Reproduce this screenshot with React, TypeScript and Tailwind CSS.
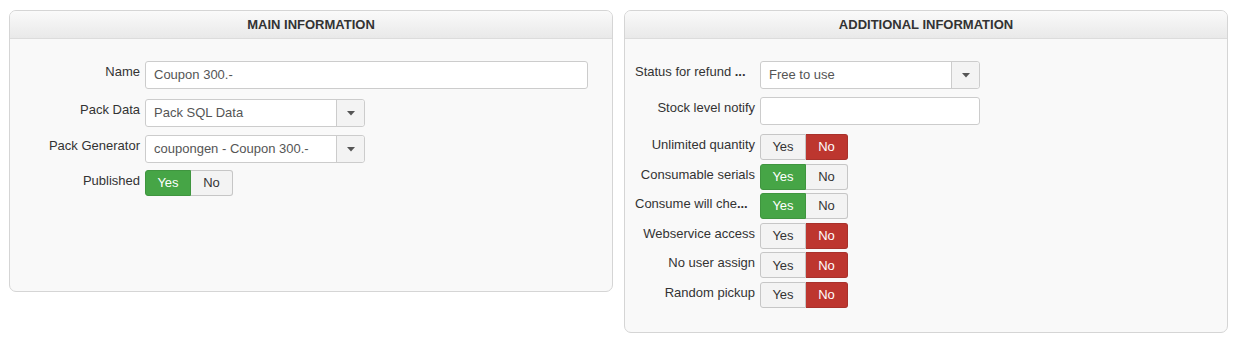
import React from "react";

const font = { fontFamily: '"Liberation Sans", Arial, sans-serif' };

function Label({ children, left = false }: { children: React.ReactNode; left?: boolean }) {
  return (
    <div
      className={
        left
          ? "w-[130px] shrink-0 pl-[10px] pt-[2px] text-left text-[13px] leading-[18px] text-[#333] whitespace-nowrap"
          : "w-[130px] shrink-0 pl-[8px] pt-[2px] text-right text-[13px] leading-[18px] text-[#333] whitespace-nowrap"
      }
    >
      {children}
    </div>
  );
}

function TextInput({ value, width }: { value: string; width: string }) {
  return (
    <div
      className={`${width} h-[28px] flex items-center rounded-[3px] border border-[#cccccc] bg-white pl-[8px] text-[13px] text-[#555]`}
    >
      {value}
    </div>
  );
}

function Select({ value }: { value: string }) {
  return (
    <div className="w-[220px] h-[28px] flex rounded-[3px] border border-[#cccccc] bg-white text-[13px] text-[#555]">
      <div className="flex-1 flex items-center pl-[8px]">{value}</div>
      <div className="w-[28px] flex items-center justify-center border-l border-[#cccccc] bg-[#f3f3f3] rounded-r-[3px]">
        <svg width="8" height="5" viewBox="0 0 8 5">
          <path d="M0 0 L8 0 L4 4.5 Z" fill="#555" />
        </svg>
      </div>
    </div>
  );
}

function Toggle({ yes }: { yes: boolean }) {
  return (
    <div className="flex h-[26px] text-[13px]">
      <div
        className={
          yes
            ? "w-[46px] flex items-center justify-center rounded-l-[3px] border border-[#3f953f] bg-[#46a546] text-white"
            : "w-[46px] flex items-center justify-center rounded-l-[3px] border border-[#c6c6c6] bg-[#f3f3f3] text-[#333]"
        }
      >
        Yes
      </div>
      <div
        className={
          yes
            ? "w-[42px] flex items-center justify-center rounded-r-[3px] border border-l-0 border-[#c6c6c6] bg-[#f3f3f3] text-[#333]"
            : "w-[42px] flex items-center justify-center rounded-r-[3px] border border-l-0 border-[#a8312b] bg-[#bd362f] text-white"
        }
      >
        No
      </div>
    </div>
  );
}

function Row({
  label,
  children,
  className = "",
  left = false,
}: {
  label: React.ReactNode;
  children: React.ReactNode;
  className?: string;
  left?: boolean;
}) {
  return (
    <div className={`flex gap-[5px] ${className}`}>
      <Label left={left}>{label}</Label>
      {children}
    </div>
  );
}

function Panel({ title, height, children }: { title: string; height: string; children: React.ReactNode }) {
  return (
    <div className={`flex-1 ${height} flex flex-col rounded-[7px] border border-[#d5d5d5] bg-[#f9f9f9] overflow-hidden`}>
      <div className="h-[28px] shrink-0 flex items-center justify-center border-b border-[#dcdcdc] bg-gradient-to-b from-[#fafafa] to-[#e9e9e9] text-[13px] font-bold text-[#333]">
        {title}
      </div>
      <div className="flex flex-col pt-[22px]">{children}</div>
    </div>
  );
}

function Trunc({ text }: { text: string }) {
  return (
    <>
      {text}
      <span className="font-bold">...</span>
    </>
  );
}

export default function App() {
  return (
    <div className="w-[1247px] h-[342px] bg-white" style={font}>
      <div className="flex items-start gap-[11px] pl-[9px] pr-[19px] pt-[10px]">
        <Panel title="MAIN INFORMATION" height="h-[282px]">
          <Row label="Name">
            <TextInput value="Coupon 300.-" width="w-[443px]" />
          </Row>
          <Row label="Pack Data" className="mt-[10px]">
            <Select value="Pack SQL Data" />
          </Row>
          <Row label="Pack Generator" className="mt-[8px]">
            <Select value="coupongen - Coupon 300.-" />
          </Row>
          <Row label="Published" className="mt-[7px]">
            <Toggle yes={true} />
          </Row>
        </Panel>
        <Panel title="ADDITIONAL INFORMATION" height="h-[323px]">
          <Row label={<Trunc text="Status for refund " />} left>
            <Select value="Free to use" />
          </Row>
          <Row label="Stock level notify" className="mt-[8px]">
            <TextInput value="" width="w-[220px]" />
          </Row>
          <div className="flex flex-col gap-[3.6px] mt-[9px]">
            <Row label="Unlimited quantity">
              <Toggle yes={false} />
            </Row>
            <Row label="Consumable serials">
              <Toggle yes={true} />
            </Row>
            <Row label={<Trunc text="Consume will che" />} left>
              <Toggle yes={true} />
            </Row>
            <Row label="Webservice access">
              <Toggle yes={false} />
            </Row>
            <Row label="No user assign">
              <Toggle yes={false} />
            </Row>
            <Row label="Random pickup">
              <Toggle yes={false} />
            </Row>
          </div>
        </Panel>
      </div>
    </div>
  );
}
